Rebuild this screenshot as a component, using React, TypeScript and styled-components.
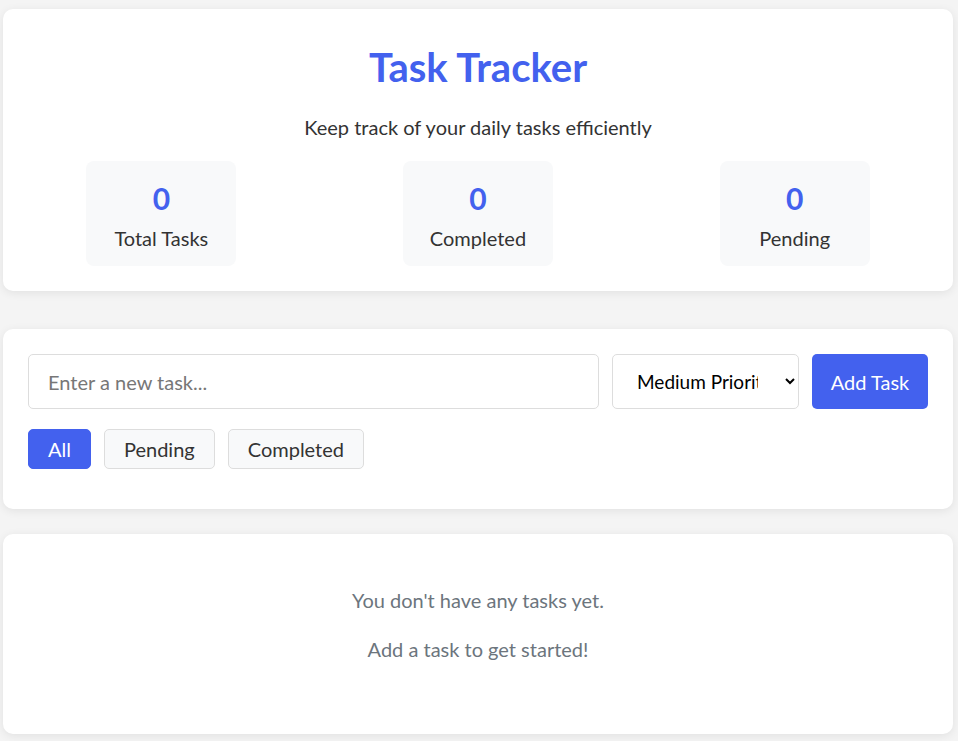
import styled, { createGlobalStyle } from "styled-components";

const GlobalStyle = createGlobalStyle`
  * {
    box-sizing: border-box;
  }
  body {
    margin: 0;
    background: #f4f4f4;
    font-family: Lato, "Open Sans", sans-serif;
    color: #333;
  }
`;

const Page = styled.div`
  display: flex;
  flex-direction: column;
  padding: 9px 5px 8px 3px;
`;

const Card = styled.section<{ $gap?: number }>`
  background: #fff;
  border-radius: 10px;
  box-shadow: 0 2px 10px rgba(0, 0, 0, 0.08);
  margin-bottom: ${(p) => p.$gap ?? 0}px;
`;

const Header = styled(Card)`
  padding: 34px 0 25px;
  text-align: center;
`;

const Title = styled.h1`
  margin: 0;
  font-size: 40px;
  line-height: 48px;
  font-weight: 700;
  color: #4361ee;
`;

const Subtitle = styled.p`
  margin: 21px 0 0;
  font-size: 20px;
  line-height: 30px;
  color: #333;
`;

const Stats = styled.div`
  display: grid;
  grid-template-columns: repeat(3, 1fr);
  justify-items: center;
  margin-top: 19px;
`;

const StatBox = styled.div`
  width: 150px;
  padding: 19px 0 13px;
  background: #f8f9fa;
  border-radius: 8px;
  text-align: center;
`;

const StatNumber = styled.div`
  font-size: 30px;
  line-height: 36px;
  font-weight: 700;
  color: #4361ee;
`;

const StatLabel = styled.div`
  margin-top: 7px;
  font-size: 20px;
  line-height: 30px;
  color: #333;
`;

const Form = styled(Card)`
  padding: 25px 25px 40px;
`;

const InputRow = styled.div`
  display: flex;
  gap: 13px;
`;

const TaskInput = styled.input`
  flex: 1;
  height: 55px;
  padding: 0 19px;
  border: 1px solid #ddd;
  border-radius: 5px;
  font: inherit;
  font-size: 20px;
  color: #333;
  outline: none;

  &::placeholder {
    color: #777;
  }
`;

const PrioritySelect = styled.select`
  width: 187px;
  height: 55px;
  padding: 0 24px 0 20px;
  border: 1px solid #ddd;
  border-radius: 5px;
  background: #fff;
  font: inherit;
  font-size: 19px;
  color: #000;
`;

const AddButton = styled.button`
  width: 116px;
  height: 55px;
  border: none;
  border-radius: 5px;
  background: #4361ee;
  color: #fff;
  font: inherit;
  font-size: 20px;
  cursor: pointer;
`;

const Filters = styled.div`
  display: flex;
  gap: 13px;
  margin-top: 20px;
`;

const FilterButton = styled.button<{ $active?: boolean }>`
  height: 40px;
  padding: 0 19px;
  border-radius: 5px;
  border: 1px solid ${(p) => (p.$active ? "#4361ee" : "#ddd")};
  background: ${(p) => (p.$active ? "#4361ee" : "#f8f9fa")};
  color: ${(p) => (p.$active ? "#fff" : "#333")};
  font: inherit;
  font-size: 20px;
  cursor: pointer;
`;

const Empty = styled(Card)`
  display: flex;
  flex-direction: column;
  align-items: center;
  gap: 19px;
  padding: 51px 0 70px;
`;

const EmptyText = styled.p`
  margin: 0;
  font-size: 20px;
  line-height: 30px;
  color: #6c757d;
`;

const stats = [
  { label: "Total Tasks", value: 0 },
  { label: "Completed", value: 0 },
  { label: "Pending", value: 0 },
];

export default function App() {
  return (
    <>
      <GlobalStyle />
      <Page>
        <Header $gap={38}>
          <Title>Task Tracker</Title>
          <Subtitle>Keep track of your daily tasks efficiently</Subtitle>
          <Stats>
            {stats.map((s) => (
              <StatBox key={s.label}>
                <StatNumber>{s.value}</StatNumber>
                <StatLabel>{s.label}</StatLabel>
              </StatBox>
            ))}
          </Stats>
        </Header>

        <Form $gap={25}>
          <InputRow>
            <TaskInput placeholder="Enter a new task..." />
            <PrioritySelect defaultValue="medium">
              <option value="low">Low Priority</option>
              <option value="medium">Medium Priority</option>
              <option value="high">High Priority</option>
            </PrioritySelect>
            <AddButton>Add Task</AddButton>
          </InputRow>
          <Filters>
            <FilterButton $active>All</FilterButton>
            <FilterButton>Pending</FilterButton>
            <FilterButton>Completed</FilterButton>
          </Filters>
        </Form>

        <Empty>
          <EmptyText>You don't have any tasks yet.</EmptyText>
          <EmptyText>Add a task to get started!</EmptyText>
        </Empty>
      </Page>
    </>
  );
}
